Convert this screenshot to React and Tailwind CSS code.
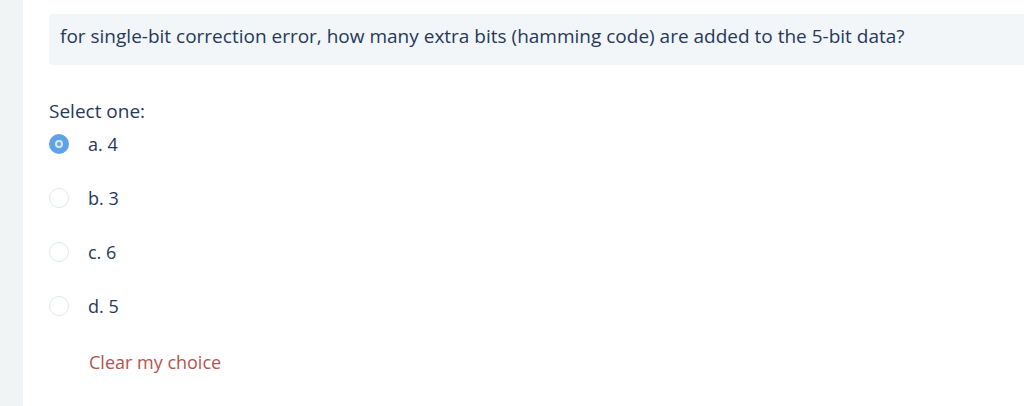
import React, { useState } from 'react';

const options = [
  { id: 'a', label: 'a. 4' },
  { id: 'b', label: 'b. 3' },
  { id: 'c', label: 'c. 6' },
  { id: 'd', label: 'd. 5' },
];

const Radio = ({ checked }) =>
  checked ? (
    <span className="w-[20px] h-[20px] rounded-full bg-[#5ea3ea] flex items-center justify-center shrink-0">
      <span className="w-[8px] h-[8px] rounded-full border-2 border-[#d9e9fb] bg-[#5ea3ea]" />
    </span>
  ) : (
    <span className="w-[20px] h-[20px] rounded-full border border-[#e1e8ec] bg-white shrink-0" />
  );

const App = () => {
  const [selected, setSelected] = useState('a');

  return (
    <div
      className="flex min-h-[406px] bg-white text-[#27395a]"
      style={{ fontFamily: '"Open Sans", "Noto Sans", sans-serif' }}
    >
      <div className="w-[23px] shrink-0 bg-[#f1f4f5]" />
      <div className="flex-1 pt-[14px] pl-[26px]">
        <div className="bg-[#f2f6f9] rounded-l-[4px] h-[51px] pl-[11px] pb-[6px] flex items-center text-[19px] whitespace-nowrap overflow-hidden">
          for single-bit correction error, how many extra bits (hamming code) are added to the 5-bit data?
        </div>

        <div className="mt-[34px] text-[19px] leading-[24px]">Select one:</div>

        <div className="flex flex-col -mt-[6px]">
          {options.map((o) => (
            <label
              key={o.id}
              className="flex items-center h-[54px] cursor-pointer"
              onClick={() => setSelected(o.id)}
            >
              <Radio checked={selected === o.id} />
              <span className="ml-[19px] text-[18px] leading-[24px]">{o.label}</span>
            </label>
          ))}
        </div>

        <div className="ml-[40px] mt-[17px] text-[18px] leading-[24px] text-[#b4534e]">Clear my choice</div>
      </div>
    </div>
  );
};

export default App;
